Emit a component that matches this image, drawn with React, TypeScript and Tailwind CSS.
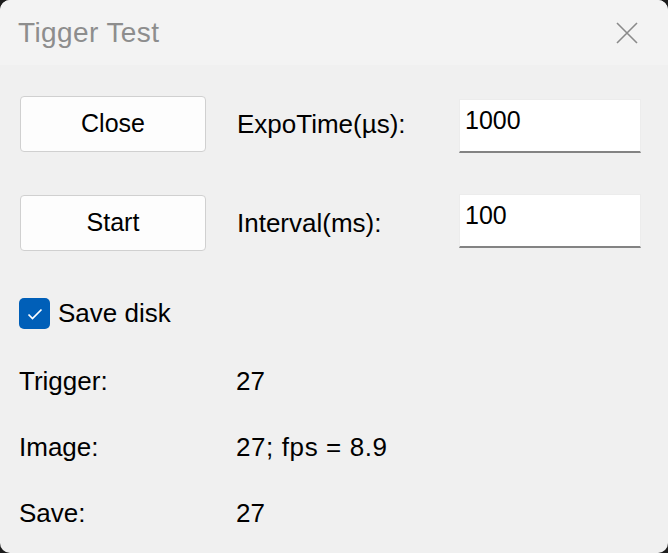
import React from 'react';

const FONT = { fontFamily: '"Liberation Sans", "Noto Sans", sans-serif' };

function Field({ value, className }: { value: string; className?: string }) {
  return (
    <div
      className={`w-[182px] h-[54px] bg-white border border-[#ececec] border-b-2 border-b-[#838383] px-[5px] pt-[4px] text-[25px] leading-[32px] text-black ${className ?? ''}`}
    >
      {value}
    </div>
  );
}

function PushButton({ label }: { label: string }) {
  return (
    <button className="w-[186px] h-[56px] shrink-0 bg-[#fdfdfd] border border-[#d0d0d0] rounded-[4px] text-[25px] text-black">
      {label}
    </button>
  );
}

export default function App() {
  return (
    <div className="w-[668px] h-[553px] bg-[#1c1c1c]" style={FONT}>
      <div className="w-full h-full rounded-[10px] overflow-hidden bg-[#f0f0f0] flex flex-col">
        {/* title bar */}
        <div className="h-[65px] shrink-0 bg-[#f3f3f3] flex items-center justify-between pl-[18px] pr-[30px]">
          <span className="text-[28px] text-[#8d8d8d] tracking-[0.4px]">Tigger Test</span>
          <svg width="22" height="22" viewBox="0 0 22 22" stroke="#8a8a8a" strokeWidth="1.6">
            <path d="M1 1L21 21M21 1L1 21" />
          </svg>
        </div>

        <div className="flex flex-col pl-[20px] text-[26px] text-black">
          <div className="flex items-start mt-[31px]">
            <PushButton label="Close" />
            <span className="ml-[31px] w-[222px] leading-[56px]">ExpoTime(µs):</span>
            <Field value="1000" className="mt-[3px]" />
          </div>
          <div className="flex items-start mt-[42px]">
            <PushButton label="Start" />
            <span className="ml-[31px] w-[222px] leading-[56px]">Interval(ms):</span>
            <Field value="100" className="-mt-[1px]" />
          </div>

          <label className="flex items-center mt-[43px] -ml-[1px]">
            <span className="w-[31px] h-[31px] rounded-[5px] bg-[#005fb8] flex items-center justify-center">
              <svg width="16" height="12" viewBox="0 0 16 12" fill="none" stroke="white" strokeWidth="1.7">
                <path d="M1.5 6.5L5.5 10.5L14.5 1.5" />
              </svg>
            </span>
            <span className="ml-[8px]">Save disk</span>
          </label>

          <div className="grid grid-cols-[217px_1fr] -ml-[1px] mt-[32px] gap-y-[34px] leading-[32px]">
            <span>Trigger:</span>
            <span>27</span>
            <span>Image:</span>
            <span className="tracking-[0.6px]">27; fps = 8.9</span>
            <span>Save:</span>
            <span>27</span>
          </div>
        </div>
      </div>
    </div>
  );
}
